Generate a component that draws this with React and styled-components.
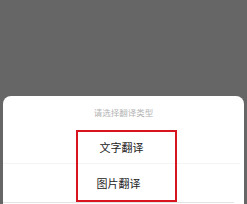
import React from 'react';
import styled, { createGlobalStyle } from 'styled-components';

const Global = createGlobalStyle`
  html, body { margin: 0; padding: 0; }
  body {
    width: 247px;
    height: 204px;
    overflow: hidden;
    background: #666666;
    font-family: "Noto Sans CJK SC", "Noto Sans", sans-serif;
  }
`;

const Screen = styled.div`
  width: 247px;
  height: 204px;
  display: flex;
  flex-direction: column;
  justify-content: flex-end;
`;

const Sheet = styled.div`
  position: relative;
  margin: 0 3px;
  height: 108px;
  background: #ffffff;
  border-radius: 8px 8px 0 0;
  display: flex;
  flex-direction: column;
`;

const Title = styled.div`
  height: 34px;
  display: flex;
  align-items: center;
  justify-content: center;
  padding-bottom: 2px;
  box-sizing: border-box;
  font-size: 8.5px;
  color: #b4b4b4;
`;

const Option = styled.div`
  height: ${(p) => p.h}px;
  display: flex;
  align-items: center;
  justify-content: center;
  font-size: 11px;
  color: #222222;
  border-bottom: 1px solid ${(p) => p.line};
  margin: 0 ${(p) => p.inset}px 0 0;
`;

const Highlight = styled.div`
  position: absolute;
  left: 73px;
  top: 34px;
  width: 97px;
  height: 68px;
  border: 2px solid #d8141e;
`;

export default function App() {
  return (
    <>
      <Global />
      <Screen>
        <Sheet>
          <Title>请选择翻译类型</Title>
          <Option h={33} line="#f4f4f4" inset={4}>文字翻译</Option>
          <Option h={38} line="#e4e4e4" inset={10}>图片翻译</Option>
          <Highlight />
        </Sheet>
      </Screen>
    </>
  );
}
